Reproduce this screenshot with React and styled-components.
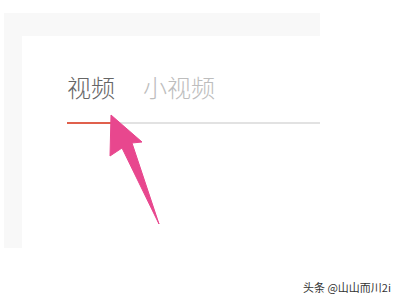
import React from "react";
import styled, { createGlobalStyle } from "styled-components";

const GlobalStyle = createGlobalStyle`
  html, body {
    margin: 0;
    padding: 0;
    background: #ffffff;
  }
  body {
    font-family: "Noto Sans CJK SC", "Noto Sans", sans-serif;
  }
`;

const Page = styled.div`
  position: relative;
  width: 400px;
  height: 300px;
  overflow: hidden;
  background: #ffffff;
`;

const Panel = styled.div`
  display: flex;
  margin: 13px 0 0 4px;
  width: 316px;
  height: 235px;
  padding: 23px 0 0 18px;
  box-sizing: border-box;
  background: #f8f8f8;
`;

const Card = styled.div`
  flex: 1;
  background: #ffffff;
  padding: 39px 0 0 45px;
`;

const TabBar = styled.div`
  display: flex;
  gap: 28px;
  border-bottom: 2px solid #e2e2e2;
`;

const Tab = styled.div`
  position: relative;
  font-size: 24px;
  font-weight: 300;
  line-height: 24px;
  padding-bottom: 23px;
  color: ${(p) => (p.$active ? "#666666" : "#bdbdbd")};
  &::after {
    content: "";
    display: ${(p) => (p.$active ? "block" : "none")};
    position: absolute;
    left: 0;
    bottom: -2px;
    width: 44px;
    height: 2px;
    background: #e0604c;
  }
`;

const Arrow = styled.svg`
  position: absolute;
  left: 105px;
  top: 110px;
  width: 60px;
  height: 120px;
`;

const Watermark = styled.div`
  position: absolute;
  right: 9px;
  bottom: 6px;
  font-size: 11px;
  line-height: 14px;
  color: #333333;
  text-shadow: 0 0 2px #ffffff;
`;

export default function App() {
  return (
    <Page>
      <GlobalStyle />
      <Panel>
        <Card>
          <TabBar>
            <Tab $active>视频</Tab>
            <Tab>小视频</Tab>
          </TabBar>
        </Card>
      </Panel>
      <Arrow viewBox="0 0 60 120">
        <polygon
          points="6,5 37,32 27,33 54,114 17,38 5,46"
          fill="#e8478e"
          stroke="#e8478e"
          strokeWidth="1"
          strokeLinejoin="round"
        />
      </Arrow>
      <Watermark>头条 @山山而川2i</Watermark>
    </Page>
  );
}
